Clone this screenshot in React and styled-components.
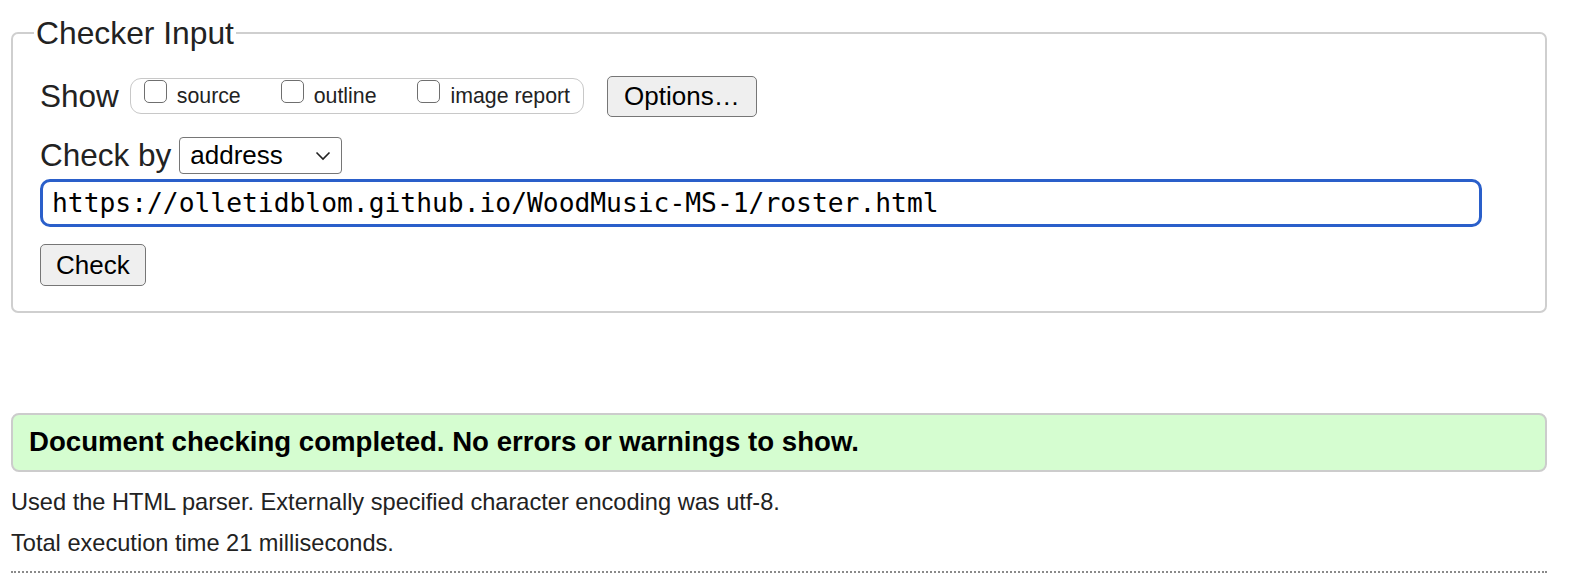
import styled, { createGlobalStyle } from 'styled-components';

const GlobalStyle = createGlobalStyle`
	html, body {
		overflow: hidden;
	}

	body {
		margin: 0;
		background: #fff;
		font-family: "Liberation Sans", Arial, sans-serif;
		color: #222;
	}
`;

const Page = styled.main`
	padding: 0 31px 0 11px;
`;

const CheckerFieldset = styled.fieldset`
	margin: 16px 0 0;
	min-width: 0;
	padding: 0 63px 25px 27px;
	border: 2px solid #cfcfcf;
	border-radius: 7px;
	display: flex;
	flex-direction: column;
	align-items: flex-start;

	legend {
		font-size: 31.8px;
		line-height: 1.1;
		padding: 0 2px;
		margin-left: -6px;
		color: #222;
	}
`;

const Row = styled.div`
	display: flex;
	align-items: center;
	margin-top: ${(p) => p.gap || 0}px;
	height: ${(p) => p.h || 'auto'};
`;

const Label = styled.span`
	font-size: 31.5px;
	line-height: 1;
	margin-right: ${(p) => p.space || 10}px;
	color: #222;
`;

const ShowGroup = styled.div`
	display: flex;
	align-items: center;
	height: 34px;
	padding: 0 13px 0 13px;
	border: 1.5px solid #c8c8c8;
	border-radius: 11px;
	margin-right: 23px;
`;

const Option = styled.label`
	display: flex;
	align-items: center;
	margin-right: ${(p) => p.space || 0}px;
	font-size: 21.3px;
	color: #222;
`;

const Box = styled.input.attrs({ type: 'checkbox' })`
	appearance: none;
	width: 23px;
	height: 23px;
	margin: 0 10px 10px 0;
	border: 1.5px solid #6f6f6f;
	border-radius: 5px;
	background: #fff;
`;

const Button = styled.button`
	font-family: "Liberation Sans", Arial, sans-serif;
	font-size: 26px;
	color: #000;
	background: #efefef;
	border: 1.5px solid #767676;
	border-radius: 5px;
	height: ${(p) => p.h || 41}px;
	padding: 0 ${(p) => p.pad || 16}px;
	line-height: 1;
`;

const SelectWrap = styled.span`
	position: relative;
	display: inline-block;

	svg {
		position: absolute;
		right: 11px;
		top: 14px;
		pointer-events: none;
	}
`;

const Select = styled.select`
	appearance: none;
	width: 163px;
	height: 37px;
	padding: 0 0 0 10px;
	font-family: "Liberation Sans", Arial, sans-serif;
	font-size: 26px;
	color: #000;
	background: #fff;
	border: 1.5px solid #767676;
	border-radius: 4px;
`;

const UrlInput = styled.input`
	box-sizing: border-box;
	align-self: stretch;
	height: 48px;
	margin-top: 5px;
	padding: 0 9px;
	font-family: "DejaVu Sans Mono", "Liberation Mono", monospace;
	font-size: 26.3px;
	color: #000;
	border: 3px solid #2a5fca;
	border-radius: 10px;
	outline: none;
`;

const Result = styled.div`
	margin-top: 100px;
	height: 55px;
	display: flex;
	align-items: center;
	padding: 0 16px;
	background: #d5fdd0;
	border: 2px solid #cccccc;
	border-radius: 8px;
	font-size: 27.6px;
	font-weight: bold;
	color: #000;
`;

const Note = styled.p`
	margin: ${(p) => p.top}px 0 0;
	font-size: 23.6px;
	line-height: 1.15;
	color: #222;
`;

const Divider = styled.hr`
	margin: 14px 0 0;
	border: 0;
	border-top: 2px dotted #8a8a8a;
`;

const Chevron = () => (
	<svg width="16" height="10" viewBox="0 0 16 10">
		<path d="M1.5 1.5 L8 8 L14.5 1.5" fill="none" stroke="#222" strokeWidth="1.6" />
	</svg>
);

const App = () => {
	return (
		<Page>
			<GlobalStyle />
			<CheckerFieldset>
				<legend>Checker Input</legend>
				<Row gap={25} h="41px">
					<Label space={11}>Show</Label>
					<ShowGroup>
						<Option space={40}>
							<Box />
							source
						</Option>
						<Option space={41}>
							<Box />
							outline
						</Option>
						<Option>
							<Box />
							image report
						</Option>
					</ShowGroup>
					<Button>Options…</Button>
				</Row>
				<Row gap={20}>
					<Label space={8}>Check by</Label>
					<SelectWrap>
						<Select defaultValue="address">
							<option value="address">address</option>
							<option value="upload">file upload</option>
							<option value="input">text input</option>
						</Select>
						<Chevron />
					</SelectWrap>
				</Row>
				<UrlInput defaultValue="https://olletidblom.github.io/WoodMusic-MS-1/roster.html" />
				<Row gap={17}>
					<Button h={42} pad={15}>
						Check
					</Button>
				</Row>
			</CheckerFieldset>
			<Result>Document checking completed. No errors or warnings to show.</Result>
			<Note top={17}>Used the HTML parser. Externally specified character encoding was utf-8.</Note>
			<Note top={14}>Total execution time 21 milliseconds.</Note>
			<Divider />
		</Page>
	);
};

export default App;
